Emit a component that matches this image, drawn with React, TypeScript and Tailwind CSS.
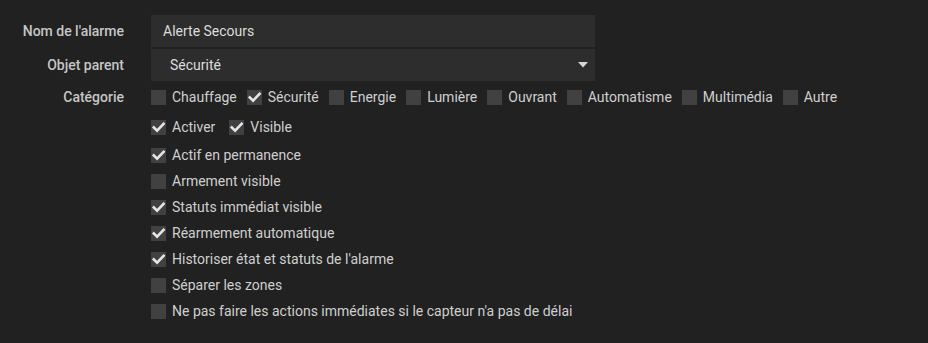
import React, { useState } from 'react';

const categories = [
  { name: 'Chauffage', checked: false },
  { name: 'Sécurité', checked: true },
  { name: 'Energie', checked: false },
  { name: 'Lumière', checked: false },
  { name: 'Ouvrant', checked: false },
  { name: 'Automatisme', checked: false },
  { name: 'Multimédia', checked: false },
  { name: 'Autre', checked: false },
];

const options = [
  { name: 'Actif en permanence', checked: true },
  { name: 'Armement visible', checked: false },
  { name: 'Statuts immédiat visible', checked: true },
  { name: 'Réarmement automatique', checked: true },
  { name: "Historiser état et statuts de l'alarme", checked: true },
  { name: 'Séparer les zones', checked: false },
  { name: "Ne pas faire les actions immédiates si le capteur n'a pas de délai", checked: false },
];

const Check: React.FC<{ label: string; initial: boolean; className?: string }> = ({ label, initial, className }) => {
  const [checked, setChecked] = useState(initial);
  return (
    <label className={`flex items-center cursor-pointer ${className ?? ''}`} onClick={() => setChecked(c => !c)}>
      <span className="relative w-[15px] h-[15px] bg-[#414141] shrink-0">
        {checked && (
          <svg viewBox="0 0 15 15" className="absolute inset-0 w-[15px] h-[15px]">
            <path d="M2.8 7.4 L6.1 10.6 L12.6 3.9" fill="none" stroke="#e6e6e6" strokeWidth="2.6" strokeLinecap="square" />
          </svg>
        )}
      </span>
      <span className="ml-[6px] text-[14px] text-[#cfcfcf] whitespace-nowrap">{label}</span>
    </label>
  );
};

const App: React.FC = () => {
  const [name, setName] = useState('Alerte Secours');

  return (
    <div className="w-[928px] h-[343px] bg-[#212121] pt-[15px] font-['Roboto',sans-serif]">
      {/* Nom */}
      <div className="flex items-center h-8">
        <div className="w-[124px] text-right text-[14px] font-medium text-[#c6c6c6]">Nom de l'alarme</div>
        <input
          value={name}
          onChange={e => setName(e.target.value)}
          className="ml-[27px] w-[444px] h-8 bg-[#2d2d2d] px-3 text-[14px] text-[#dcdcdc] outline-none"
        />
      </div>

      {/* Objet parent */}
      <div className="flex items-center h-8 mt-[2px]">
        <div className="w-[124px] text-right text-[14px] font-medium text-[#c6c6c6]">Objet parent</div>
        <div className="ml-[27px] w-[444px] h-8 bg-[#2d2d2d] pl-[19px] pr-[7px] flex items-center justify-between">
          <span className="text-[14px] text-[#dcdcdc]">Sécurité</span>
          <svg width="10" height="6" viewBox="0 0 10 6">
            <path d="M0 0 H10 L5 5.5 Z" fill="#d6d6d6" />
          </svg>
        </div>
      </div>

      {/* Catégorie */}
      <div className="flex items-center h-[26px] mt-[3px]">
        <div className="w-[124px] text-right text-[14px] font-medium text-[#c6c6c6]">Catégorie</div>
        <div className="ml-[27px] flex items-center gap-[10px]">
          {categories.map(c => (
            <Check key={c.name} label={c.name} initial={c.checked} />
          ))}
        </div>
      </div>

      {/* Options */}
      <div className="ml-[151px] mt-[4px] flex flex-col">
        <div className="flex items-center h-[26px] mb-[2px]">
          <Check label="Activer" initial={true} />
          <Check label="Visible" initial={true} className="ml-[14px]" />
        </div>
        {options.map(o => (
          <div key={o.name} className="flex items-center h-[26px]">
            <Check label={o.name} initial={o.checked} />
          </div>
        ))}
      </div>
    </div>
  );
};

export default App;
